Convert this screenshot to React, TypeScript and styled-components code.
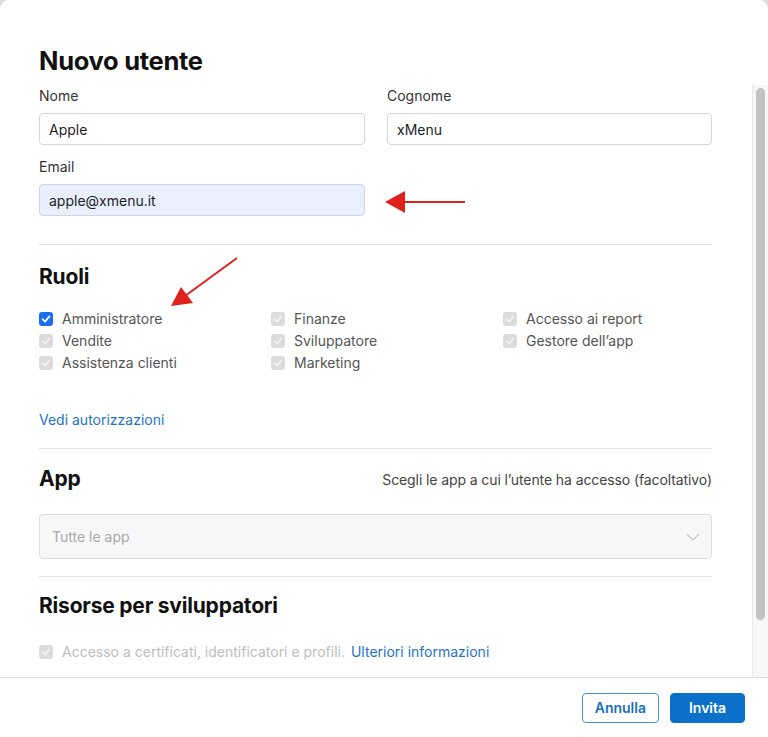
import styled, { createGlobalStyle } from 'styled-components';

const GlobalStyle = createGlobalStyle`
    html, body {
        margin: 0;
        padding: 0;
        background: #dcdcdc;
    }
    body {
        font-family: 'Inter', 'Liberation Sans', sans-serif;
        -webkit-font-smoothing: antialiased;
    }
    * {
        box-sizing: border-box;
    }
`

const Dialog = styled.div`
    position: relative;
    width: 768px;
    height: 737px;
    background: #fff;
    border-radius: 9px 9px 0 0;
    display: flex;
    flex-direction: column;
    overflow: hidden;
`

const Header = styled.div`
    height: 85px;
    flex-shrink: 0;
    padding: 46px 39px 0 39px;
`

const Title = styled.h1`
    margin: 0;
    font-size: 25.5px;
    line-height: 30px;
    font-weight: 700;
    letter-spacing: -0.3px;
    color: #111;
`

// scroll area: the form on the left, a static rail on the right
const Scroller = styled.div`
    flex: 1;
    min-height: 0;
    display: flex;
`

const Body = styled.div`
    flex: 1;
    overflow: hidden;
    padding: 2px 40px 0 39px;
`

const Rail = styled.div`
    width: 16px;
    flex-shrink: 0;
    background: #f7f7f7;
    border-left: 1px solid #ebebeb;
    padding: 3px 3px 0 3px;
`

const Thumb = styled.div<{ $length: number }>`
    height: ${p => p.$length}px;
    border-radius: 5px;
    background: #c3c3c3;
`

const FieldGrid = styled.div`
    display: grid;
    grid-template-columns: 326px 325px;
    column-gap: 22px;
    row-gap: 13px;
`

const Field = styled.label`
    display: flex;
    flex-direction: column;
    gap: 8px;
`

const FieldLabel = styled.span`
    font-size: 14px;
    line-height: 18px;
    color: #333;
`

const TextInput = styled.input<{ $filled?: boolean }>`
    height: 32px;
    width: 100%;
    padding: 0 9px;
    font-family: inherit;
    font-size: 14px;
    color: #1d1d1f;
    background: ${p => (p.$filled ? '#e8f0fe' : '#fff')};
    border: 1px solid ${p => (p.$filled ? '#cfd6e0' : '#d6d6d6')};
    border-radius: 4px;
    outline: none;
`

const Divider = styled.hr<{ $top: number }>`
    margin: ${p => p.$top}px 0 0 0;
    border: none;
    border-top: 1px solid #e2e2e2;
`

const SectionHead = styled.div<{ $top?: number }>`
    display: flex;
    justify-content: space-between;
    align-items: center;
    margin-top: ${p => p.$top ?? 16}px;
`

const SectionTitle = styled.h2`
    margin: 0;
    font-size: 21px;
    line-height: 26px;
    font-weight: 700;
    letter-spacing: -0.2px;
    color: #111;
`

const SectionHint = styled.span`
    font-size: 14px;
    color: #444;
    letter-spacing: -0.1px;
`

const RoleGrid = styled.div`
    display: grid;
    grid-template-columns: 232px 232px 1fr;
    grid-auto-flow: column;
    grid-template-rows: repeat(3, 22px);
    margin-top: 18px;
`

const CheckRow = styled.label<{ $muted?: boolean }>`
    display: flex;
    align-items: center;
    gap: 9px;
    font-size: 14px;
    line-height: 22px;
    color: ${p => (p.$muted ? '#bdbdbd' : '#555')};
    white-space: nowrap;
`

const Box = styled.span<{ $active?: boolean }>`
    width: 14px;
    height: 14px;
    flex-shrink: 0;
    border-radius: 3px;
    display: flex;
    align-items: center;
    justify-content: center;
    background: ${p => (p.$active ? '#1a6ff0' : '#dcdcdc')};
`

const Link = styled.a`
    color: #1f74c6;
    text-decoration: none;
    font-size: 14px;
    line-height: 18px;
    cursor: pointer;
`

const LinkBlock = styled.div`
    margin-top: 35px;
`

const Select = styled.div`
    margin-top: 22px;
    height: 45px;
    border: 1px solid #dedede;
    border-radius: 4px;
    background: #f7f7f7;
    display: flex;
    align-items: center;
    justify-content: space-between;
    padding: 0 11px 0 12px;
    font-size: 14px;
    color: #aaa;
`

const SingleCheck = styled.div`
    margin-top: 22px;
    display: flex;
    align-items: center;
    gap: 6px;
`

const Footer = styled.div`
    height: 60px;
    flex-shrink: 0;
    border-top: 1px solid #dcdcdc;
    display: flex;
    align-items: center;
    justify-content: flex-end;
    gap: 11px;
    padding-right: 23px;
`

const Button = styled.button<{ $primary?: boolean }>`
    height: 30px;
    min-width: 75px;
    padding: 0 12px;
    border-radius: 4px;
    font-family: inherit;
    font-size: 14px;
    font-weight: 600;
    cursor: pointer;
    color: ${p => (p.$primary ? '#fff' : '#1a6fbf')};
    background: ${p => (p.$primary ? '#0a70c9' : '#fff')};
    border: 1px solid ${p => (p.$primary ? '#0a70c9' : '#4a8fcf')};
`

const Annotations = styled.svg`
    position: absolute;
    left: 0;
    top: 0;
    pointer-events: none;
`

const Tick = ({ color }: { color: string }) => (
    <svg width="10" height="10" viewBox="0 0 10 10">
        <path d="M1.6 5.2 L4 7.6 L8.5 2.4" fill="none" stroke={color} strokeWidth="1.7" strokeLinecap="round" strokeLinejoin="round" />
    </svg>
)

function Check({ label, active, muted }: { label: string; active?: boolean; muted?: boolean }) {
    return (
        <CheckRow $muted={muted}>
            <Box $active={active}>
                <Tick color={active ? '#fff' : '#f2f2f2'} />
            </Box>
            {label}
        </CheckRow>
    )
}

const roles = [
    'Amministratore', 'Vendite', 'Assistenza clienti',
    'Finanze', 'Sviluppatore', 'Marketing',
    'Accesso ai report', "Gestore dell’app",
]

export default function App() {
    return (
        <>
            <GlobalStyle />
            <Dialog>
                <Header>
                    <Title>Nuovo utente</Title>
                </Header>
                <Scroller>
                    <Body>
                        <FieldGrid>
                            <Field>
                                <FieldLabel>Nome</FieldLabel>
                                <TextInput defaultValue="Apple" />
                            </Field>
                            <Field>
                                <FieldLabel>Cognome</FieldLabel>
                                <TextInput defaultValue="xMenu" />
                            </Field>
                            <Field>
                                <FieldLabel>Email</FieldLabel>
                                <TextInput $filled defaultValue="apple@xmenu.it" />
                            </Field>
                        </FieldGrid>

                        <Divider $top={28} />
                        <SectionHead $top={19}>
                            <SectionTitle>Ruoli</SectionTitle>
                        </SectionHead>
                        <RoleGrid>
                            {roles.map((r, i) => (
                                <Check key={r} label={r} active={i === 0} />
                            ))}
                        </RoleGrid>
                        <LinkBlock>
                            <Link>Vedi autorizzazioni</Link>
                        </LinkBlock>

                        <Divider $top={19} />
                        <SectionHead $top={17}>
                            <SectionTitle>App</SectionTitle>
                            <SectionHint>Scegli le app a cui l’utente ha accesso (facoltativo)</SectionHint>
                        </SectionHead>
                        <Select>
                            Tutte le app
                            <svg width="14" height="8" viewBox="0 0 14 8">
                                <path d="M1 1 L7 7 L13 1" fill="none" stroke="#c4c4c4" strokeWidth="1.2" />
                            </svg>
                        </Select>

                        <Divider $top={17} />
                        <SectionHead>
                            <SectionTitle>Risorse per sviluppatori</SectionTitle>
                        </SectionHead>
                        <SingleCheck>
                            <Check label="Accesso a certificati, identificatori e profili." muted />
                            <Link>Ulteriori informazioni</Link>
                        </SingleCheck>
                    </Body>
                    <Rail>
                        <Thumb $length={532} />
                    </Rail>
                </Scroller>
                <Footer>
                    <Button>Annulla</Button>
                    <Button $primary>Invita</Button>
                </Footer>

                <Annotations width="768" height="737" viewBox="0 0 768 737">
                    <line x1="465" y1="202" x2="400" y2="202" stroke="#e0201c" strokeWidth="2" />
                    <polygon points="385,202 405,191 405,213" fill="#e0201c" />
                    <line x1="237" y1="258" x2="185" y2="296" stroke="#e0201c" strokeWidth="2" />
                    <polygon points="171,306 181,287 193,303" fill="#e0201c" />
                </Annotations>
            </Dialog>
        </>
    )
}
